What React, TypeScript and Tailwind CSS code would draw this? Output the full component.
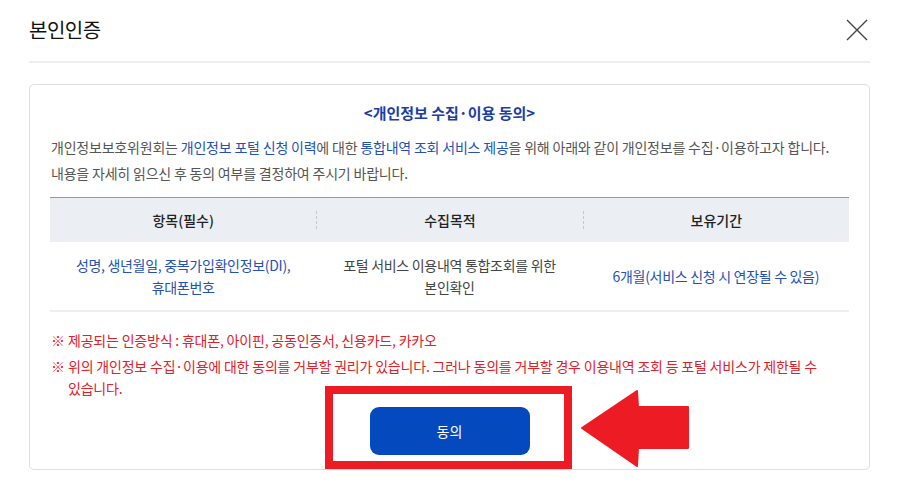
const font = { fontFamily: '"Noto Sans CJK KR", "Noto Sans", sans-serif' };

function CloseIcon() {
  return (
    <svg width="22" height="22" viewBox="0 0 22 22" className="text-[#444]">
      <path d="M1 1 L21 21 M21 1 L1 21" stroke="currentColor" strokeWidth="1.4" fill="none" />
    </svg>
  );
}

function App() {
  return (
    <div className="relative w-[899px] h-[484px] bg-white text-[#333]" style={font}>
      {/* header */}
      <div className="mx-[29px] h-[63px] flex items-center justify-between border-b-2 border-[#eeeeee]">
        <h1 className="text-[20px] leading-[28px] text-[#111] tracking-[-0.5px] -mt-[1px]">본인인증</h1>
        <div className="mr-[2px] -mt-[1px]">
          <CloseIcon />
        </div>
      </div>

      {/* card */}
      <div className="mx-[29px] mt-[21px] h-[386px] border border-[#dedede] rounded-[5px] px-[20px] pt-[17px]">
        <h2 className="text-center text-[15px] leading-[22px] font-bold text-[#1a3ea5]">
          &lt;개인정보 수집·이용 동의&gt;
        </h2>
        <p className="mt-[10px] text-[14px] leading-[26px] text-[#555] tracking-[-0.2px] pl-[1px]">
          개인정보보호위원회는 <span className="text-[#2451b3]">개인정보 포털 신청 이력</span>에 대한{" "}
          <span className="text-[#2451b3]">통합내역 조회 서비스 제공</span>을 위해 아래와 같이 개인정보를 수집·이용하고자 합니다.
          <br />
          내용을 자세히 읽으신 후 동의 여부를 결정하여 주시기 바랍니다.
        </p>

        {/* table */}
        <div className="mt-[11px] border-t border-[#999]">
          <div className="grid grid-cols-3 h-[44px] bg-[#ebeef2] items-center text-[14px] font-medium text-[#222]">
            <div className="text-center">항목(필수)</div>
            <div className="text-center border-l border-dashed border-[#c4c8cf] h-[18px] leading-[18px]">수집목적</div>
            <div className="text-center border-l border-dashed border-[#c4c8cf] h-[18px] leading-[18px]">보유기간</div>
          </div>
          <div className="grid grid-cols-3 h-[70px] items-center text-[14px] leading-[22px] border-b-2 border-[#eeeeee] tracking-[-0.3px]">
            <div className="text-center text-[#2451b3]">
              성명, 생년월일, 중복가입확인정보(DI),
              <br />
              휴대폰번호
            </div>
            <div className="text-center text-[#444]">
              포털 서비스 이용내역 통합조회를 위한
              <br />
              본인확인
            </div>
            <div className="text-center text-[#2451b3]">6개월(서비스 신청 시 연장될 수 있음)</div>
          </div>
        </div>

        {/* notes */}
        <ul className="mt-[17px] text-[14px] leading-[22px] text-[#e2202a] tracking-[-0.2px] pl-[1px] flex flex-col gap-[4px]">
          <li className="flex">
            <span className="w-[17px] shrink-0">※</span>
            <span>제공되는 인증방식 : 휴대폰, 아이핀, 공동인증서, 신용카드, 카카오</span>
          </li>
          <li className="flex">
            <span className="w-[17px] shrink-0">※</span>
            <span>
              위의 개인정보 수집·이용에 대한 동의를 거부할 권리가 있습니다. 그러나 동의를 거부할 경우 이용내역 조회 등 포털 서비스가 제한될 수
              <br />
              있습니다.
            </span>
          </li>
        </ul>

        <div className="mt-[8px] flex justify-center">
          <button className="w-[160px] h-[48px] rounded-[9px] bg-[#0449bd] text-white text-[14px]">동의</button>
        </div>
      </div>

      {/* annotation overlay */}
      <div className="absolute left-[325px] top-[386px] w-[247px] h-[83px] border-[8px] border-[#ed1c24]" />
      <svg className="absolute left-[580px] top-[389px]" width="112" height="80" viewBox="0 0 112 80">
        <path d="M2 39 L57 2 L58 18 L108 18 L108 59 L58 59 L57 77 Z" fill="#ed1c24" stroke="#ed1c24" strokeWidth="2" strokeLinejoin="round" />
      </svg>
    </div>
  );
}

export default App;
